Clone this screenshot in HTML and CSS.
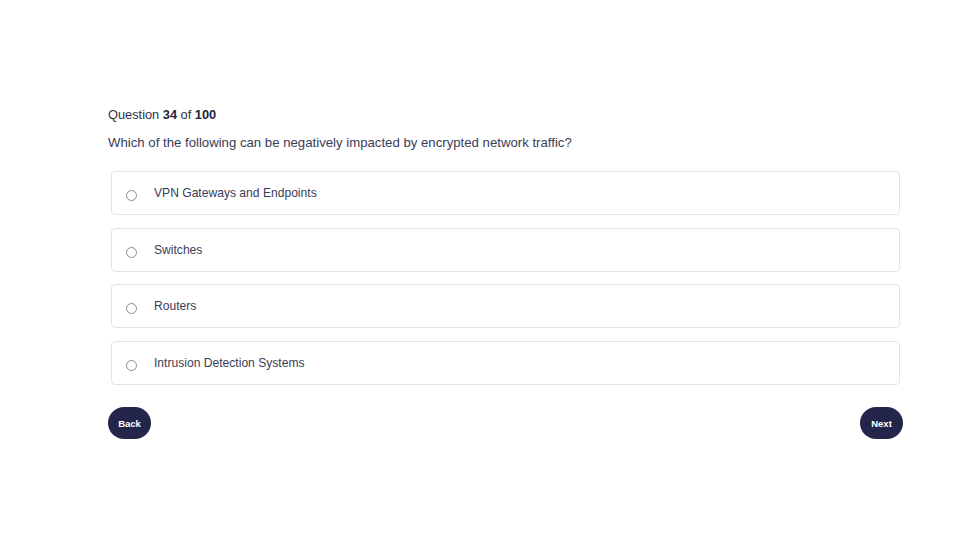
FILE: index.html
```html
<!DOCTYPE html>
<html lang="en">
<head>
<meta charset="utf-8">
<title>Question 34 of 100</title>
<link rel="stylesheet" href="styles.css">
</head>
<body>
<main class="quiz">
  <p class="counter">Question <b>34</b> of <b>100</b></p>
  <p class="question">Which of the following can be negatively impacted by encrypted network traffic?</p>
  <div class="options">
    <label class="option"><input type="radio" name="answer"><span class="radio"></span><span class="label">VPN Gateways and Endpoints</span></label>
    <label class="option"><input type="radio" name="answer"><span class="radio"></span><span class="label">Switches</span></label>
    <label class="option"><input type="radio" name="answer"><span class="radio"></span><span class="label">Routers</span></label>
    <label class="option"><input type="radio" name="answer"><span class="radio"></span><span class="label">Intrusion Detection Systems</span></label>
  </div>
  <div class="nav">
    <button class="btn">Back</button>
    <button class="btn">Next</button>
  </div>
</main>
</body>
</html>
```

FILE: styles.css
```css
* { box-sizing: border-box; }
html, body { margin: 0; padding: 0; background: #ffffff; }
body {
  font-family: "Liberation Sans", Arial, Helvetica, sans-serif;
  color: #2e3048;
}
.quiz {
  width: 795px;
  margin-left: 108px;
  padding-top: 108px;
}
.counter {
  margin: 0;
  font-size: 12.8px;
  line-height: 14px;
  color: #2e3048;
}
.counter b { font-weight: 700; color: #23253d; }
.question {
  margin: 14px 0 0;
  font-size: 13.2px;
  line-height: 14px;
  color: #3a3c58;
}
.options {
  margin: 21px 3px 0;
  display: flex;
  flex-direction: column;
  gap: 12.7px;
}
.option {
  height: 44px;
  border: 1.5px solid #e4e4e6;
  border-radius: 4px;
  display: flex;
  align-items: center;
  padding-left: 14px;
  cursor: pointer;
}
.option input { display: none; }
.radio {
  width: 11px;
  height: 11px;
  border: 1px solid #8a8a8e;
  border-radius: 50%;
  margin-top: 5px;
  flex: none;
}
.label {
  margin-left: 17px;
  font-size: 12.1px;
  color: #3a3c58;
}
.nav {
  display: flex;
  justify-content: space-between;
  margin-top: 22px;
}
.btn {
  width: 43px;
  height: 32px;
  border: none;
  border-radius: 16px;
  background: #23254a;
  color: #ffffff;
  font-family: "Liberation Sans", Arial, sans-serif;
  font-weight: 700;
  font-size: 9.5px;
  padding: 0;
  cursor: pointer;
}
```
